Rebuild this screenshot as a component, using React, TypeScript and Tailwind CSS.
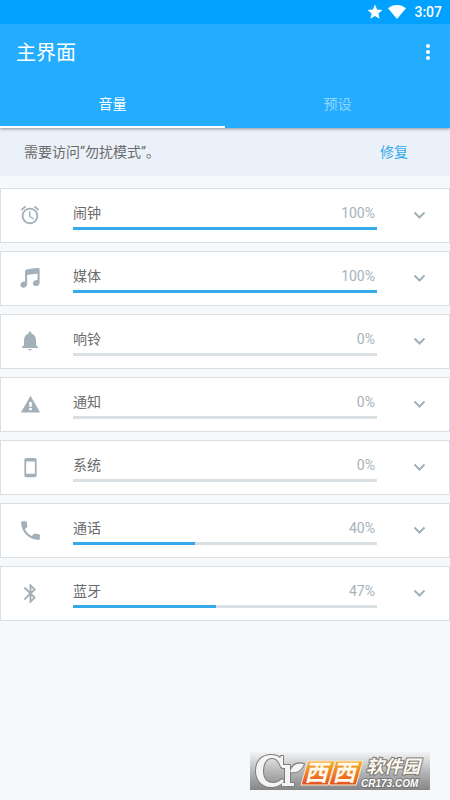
import { useState } from "react";
import type { ReactNode } from "react";

function Glyph({ size, d }: { size: string; d: string }) {
  return (
    <svg viewBox="0 0 24 24" fill="currentColor" aria-hidden="true" className={`${size} shrink-0`}>
      <path d={d} />
    </svg>
  );
}

type Channel = { id: string; label: string; volume: number; icon: ReactNode };

const channels: Channel[] = [
  {
    id: "alarm",
    label: "闹钟",
    volume: 100,
    icon: (
      <Glyph
        size="size-[22px]"
        d="M22 5.72l-4.6-3.86-1.29 1.53 4.6 3.86L22 5.72zM7.88 3.39L6.6 1.86 2 5.71l1.29 1.53 4.59-3.85zM12.5 8H11v6l4.75 2.85.75-1.23-4-2.37V8zM12 4c-4.97 0-9 4.03-9 9s4.02 9 9 9c4.97 0 9-4.03 9-9s-4.03-9-9-9zm0 16c-3.87 0-7-3.13-7-7s3.13-7 7-7 7 3.13 7 7-3.13 7-7 7z"
      />
    ),
  },
  {
    id: "media",
    label: "媒体",
    volume: 100,
    icon: (
      <Glyph
        size="size-[22px]"
        d="M22.500 2.500v14.300c0 2.300-1.900 4-4.100 4-1.900 0-3.300-1.100-3.300-2.800 0-2.200 2-3.800 4.200-3.800.3 0 .6 0 .9.1V7.100L8.900 8.600v9.900c0 2.300-1.900 4-4.100 4-1.900 0-3.300-1.100-3.300-2.800 0-2.200 2-3.800 4.200-3.800.3 0 .6 0 .9.1V4.700c0-1 .7-1.700 1.700-1.900 4.300-.9 8.300-1.300 12.600-1.600 1 0 1.600.4 1.600 1.300z"
      />
    ),
  },
  {
    id: "ring",
    label: "响铃",
    volume: 0,
    icon: (
      <Glyph
        size="size-6"
        d="M12 21.5c1.1 0 2-.8 2-1.5h-4c0 .7.9 1.5 2 1.5zm6-5.5v-5c0-3.07-1.64-5.64-4.5-6.32V4c0-.83-.67-1.5-1.5-1.5s-1.5.67-1.5 1.5v.68C7.63 5.36 6 7.92 6 11v5l-2 2v1h16v-1l-2-2z"
      />
    ),
  },
  {
    id: "notification",
    label: "通知",
    volume: 0,
    icon: <Glyph size="size-[21px]" d="M1 21h22L12 2 1 21zm12.5-2.5h-3v-2.6h3v2.6zm0-4h-3V9h3v5.5z" />,
  },
  {
    id: "system",
    label: "系统",
    volume: 0,
    icon: (
      <Glyph
        size="size-[21px]"
        d="M17 1.01L7 1c-1.1 0-2 .9-2 2v18c0 1.1.9 2 2 2h10c1.1 0 2-.9 2-2V3c0-1.1-.9-1.99-2-1.99zM17 19H7V5h10v14z"
      />
    ),
  },
  {
    id: "call",
    label: "通话",
    volume: 40,
    icon: (
      <Glyph
        size="size-[25px]"
        d="M6.62 10.79c1.44 2.83 3.76 5.14 6.59 6.59l2.2-2.2c.27-.27.67-.36 1.02-.24 1.12.37 2.33.57 3.57.57.55 0 1 .45 1 1V20c0 .55-.45 1-1 1-9.39 0-17-7.61-17-17 0-.55.45-1 1-1h3.5c.55 0 1 .45 1 1 0 1.25.2 2.45.57 3.57.11.35.03.74-.25 1.02l-2.2 2.2z"
      />
    ),
  },
  {
    id: "bluetooth",
    label: "蓝牙",
    volume: 47,
    icon: (
      <Glyph
        size="size-[23px]"
        d="M17.71 7.71L12 2h-1v7.59L6.41 5 5 6.41 10.59 12 5 17.59 6.41 19 11 14.41V22h1l5.71-5.71-4.3-4.29 4.3-4.29zM13 5.83l1.88 1.88L13 9.59V5.83zm1.88 10.46L13 18.17v-3.76l1.88 1.88z"
      />
    ),
  },
];

function StatusBar() {
  return (
    <div className="flex h-6 items-center justify-end bg-[#00a1ff] pr-2 text-white">
      <Glyph
        size="mr-1 size-[18px]"
        d="M12 17.27L18.18 21l-1.64-7.03L22 9.24l-7.19-.61L12 2 9.19 8.63 2 9.24l5.46 4.73L5.82 21z"
      />
      <svg viewBox="0 0 18 14" fill="currentColor" aria-hidden="true" className="mr-2 h-[14px] w-[18px]">
        <path d="M9 14L0 3.3C2.4 1.2 5.6 0 9 0s6.600 1.200 9 3.300z" />
      </svg>
      <span className="text-sm font-medium">3:07</span>
    </div>
  );
}

function VolumeCard({ channel }: { channel: Channel }) {
  const [volume, setVolume] = useState(channel.volume);
  return (
    <li className="flex h-[55px] items-center border border-[#d8e0e5] bg-white pb-px">
      <span className="ml-[17px] flex size-6 items-center justify-center text-[#a3b0b8]">{channel.icon}</span>
      <div className="ml-[31px] min-w-0 flex-1">
        <div className="flex h-[26px] items-center justify-between">
          <label htmlFor={channel.id} className="text-[#6b6b6b]">
            {channel.label}
          </label>
          <output htmlFor={channel.id} className="pr-0.5 text-[#a6b2ba]">
            {volume}%
          </output>
        </div>
        <input
          id={channel.id}
          type="range"
          min={0}
          max={100}
          value={volume}
          onChange={(e) => setVolume(Number(e.target.value))}
          className="mt-px block h-[3px] w-full cursor-pointer appearance-none [&::-webkit-slider-thumb]:size-0 [&::-webkit-slider-thumb]:appearance-none"
          style={{ background: `linear-gradient(to right, #35a9ea ${volume}%, #d8e0e4 ${volume}%)` }}
        />
      </div>
      <button
        type="button"
        aria-label={`展开${channel.label}`}
        className="ml-[30px] mr-[18px] flex size-6 items-center justify-center text-[#a3b0b8]"
      >
        <svg viewBox="0 0 24 24" fill="none" stroke="currentColor" strokeWidth="2" aria-hidden="true" className="size-6">
          <path d="M7.500 9.500l5 5 5-5" />
        </svg>
      </button>
    </li>
  );
}

const letterC =
  "M33 4v11h-2C29 9 26 6 22 6c-6 0-9 6-9 13 0 8 4 12 10 12 4 0 7-2 9-4l2 2c-3 4-8 6-13 6C12 35 6 28 6 19 6 9 12 3 21 3c4 0 7 1 9 3l1-2z";
const letterR = "M32 13h8v18h4v3H32v-3h3V16h-3z";
const leaf = "M40 20c2-7 7-10 14-8-3 7-7 9-14 8z";

function Watermark() {
  return (
    <svg
      viewBox="0 0 180 38"
      role="img"
      aria-label="西西软件园 CR173.COM"
      className="fixed bottom-[10px] right-5 h-[38px] w-[180px]"
    >
      <defs>
        <linearGradient id="plate" x1="0" y1="0" x2="0" y2="1">
          <stop offset="0" stopColor="#f3f4f5" />
          <stop offset="0.5" stopColor="#b7b8b9" />
          <stop offset="1" stopColor="#858687" />
        </linearGradient>
        <linearGradient id="ember" x1="0" y1="0" x2="0" y2="1">
          <stop offset="0" stopColor="#f6b02c" />
          <stop offset="1" stopColor="#e4501f" />
        </linearGradient>
      </defs>
      <rect width="180" height="38" fill="url(#plate)" />
      <g fill="#f4f4f4" stroke="#7d7d7d" strokeWidth="2" strokeLinejoin="round">
        <path d={letterC} />
        <path d={letterR} />
        <path d={leaf} />
      </g>
      <g fill="#f4f4f4">
        <path d={letterC} />
        <path d={letterR} />
        <path d={leaf} />
      </g>
      <g stroke="#fbe9d0" strokeWidth="1">
        <path d="M58 9h27l-7 24H51z" fill="url(#ember)" />
        <path d="M86 9h27l-7 24H79z" fill="url(#ember)" />
      </g>
      <g
        fill="#fff8ec"
        fontFamily="'Noto Sans CJK SC', sans-serif"
        fontStyle="italic"
        fontWeight="700"
        textAnchor="middle"
      >
        <text x="66" y="29" fontSize="23">
          西
        </text>
        <text x="94" y="29" fontSize="23">
          西
        </text>
        <text x="143" y="21" fontSize="18" stroke="#777" strokeWidth="2" paintOrder="stroke">
          软件园
        </text>
      </g>
      <text
        x="111"
        y="35"
        fill="#ffffff"
        stroke="#777"
        strokeWidth="2"
        paintOrder="stroke"
        fontFamily="'Liberation Sans', Arial, sans-serif"
        fontStyle="italic"
        fontSize="10"
        fontWeight="700"
      >
        CR173.COM
      </text>
    </svg>
  );
}

export default function App() {
  return (
    <div className="min-h-screen bg-[#f6f8fa] font-[Roboto,'Noto_Sans_CJK_SC',sans-serif] text-sm" lang="zh-CN">
      <header className="relative bg-[#24adff] text-white shadow-[0_1px_3px_rgba(0,0,0,0.4)]">
        <StatusBar />
        <div className="flex h-14 items-center justify-between pl-4 pr-[10px]">
          <h1 className="pt-0.5 text-xl">主界面</h1>
          <button type="button" aria-label="更多选项" className="flex size-6 items-center justify-center">
            <Glyph
              size="size-6"
              d="M12 8c1.100 0 2-.9 2-2s-.9-2-2-2-2 .9-2 2 .9 2 2 2zm0 2c-1.100 0-2 .9-2 2s.9 2 2 2 2-.9 2-2-.9-2-2-2zm0 6c-1.100 0-2 .9-2 2s.9 2 2 2 2-.9 2-2-.9-2-2-2z"
            />
          </button>
        </div>
        <div role="tablist" className="grid h-12 grid-cols-2">
          <button type="button" role="tab" aria-selected="true" className="border-y-2 border-t-transparent border-b-white">
            音量
          </button>
          <button type="button" role="tab" aria-selected="false" className="border-y-2 border-transparent text-white/50">
            预设
          </button>
        </div>
      </header>
      <main>
        <div className="flex h-12 items-center justify-between bg-[#ebf1f8] pl-6 pr-[42px]">
          <p className="text-[#6b6b6b]">需要访问“勿扰模式”。</p>
          <button type="button" className="text-[#35a9ea]">
            修复
          </button>
        </div>
        <ul className="mt-3 flex flex-col gap-2">
          {channels.map((channel) => (
            <VolumeCard key={channel.id} channel={channel} />
          ))}
        </ul>
      </main>
      <Watermark />
    </div>
  );
}
